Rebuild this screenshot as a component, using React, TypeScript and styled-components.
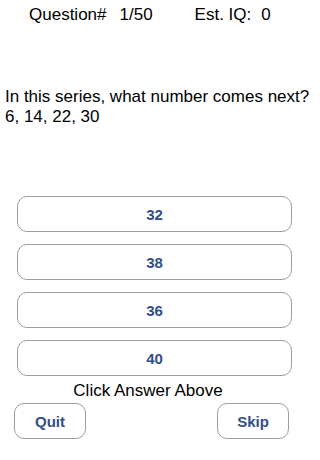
import React from "react";
import styled, { createGlobalStyle } from "styled-components";

const GlobalStyle = createGlobalStyle`
  html, body {
    margin: 0;
    padding: 0;
    background: #ffffff;
  }
  body {
    font-family: "Liberation Sans", Arial, Helvetica, sans-serif;
    color: #000000;
  }
`;

const answers = ["32", "38", "36", "40"];

const App = () => {
  return (
    <Screen>
      <GlobalStyle />
      <Header>
        <HeaderLabel>Question#</HeaderLabel>
        <HeaderValue $gapLeft={13}>1/50</HeaderValue>
        <HeaderLabel $gapLeft={42}>Est. IQ:</HeaderLabel>
        <HeaderValue $gapLeft={10}>0</HeaderValue>
      </Header>
      <QuestionText>
        In this series, what number comes next?
        <br />
        6, 14, 22, 30
      </QuestionText>
      <AnswerList>
        {answers.map((a) => (
          <AnswerButton key={a}>{a}</AnswerButton>
        ))}
      </AnswerList>
      <Hint>Click Answer Above</Hint>
      <BottomRow>
        <SmallButton>Quit</SmallButton>
        <SmallButton>Skip</SmallButton>
      </BottomRow>
    </Screen>
  );
};

export default App;

const Screen = styled.div`
  width: 320px;
  height: 460px;
  display: flex;
  flex-direction: column;
  background: #ffffff;
  overflow: hidden;
`;

const Header = styled.div`
  display: flex;
  align-items: center;
  padding: 5px 0 0 29px;
  height: 20px;
  font-size: 17px;
  line-height: 20px;
`;

const HeaderLabel = styled.span<{ $gapLeft?: number }>`
  margin-left: ${(p) => (p.$gapLeft ? `${p.$gapLeft}px` : "0")};
`;

const HeaderValue = styled.span<{ $gapLeft: number }>`
  margin-left: ${(p) => p.$gapLeft}px;
`;

const QuestionText = styled.div`
  margin-top: 62px;
  padding-left: 5px;
  font-size: 17px;
  line-height: 20px;
`;

const AnswerList = styled.div`
  display: flex;
  flex-direction: column;
  gap: 12px;
  margin-top: 69px;
  padding-left: 17px;
`;

const buttonBase = `
  display: flex;
  justify-content: center;
  align-items: center;
  box-sizing: border-box;
  height: 36px;
  background: #ffffff;
  border: 1px solid #9c9c9c;
  border-radius: 10px;
  font-family: "Liberation Sans", Arial, Helvetica, sans-serif;
  font-weight: 700;
  font-size: 15px;
  color: #324e8a;
  cursor: pointer;
  padding: 0;
`;

const AnswerButton = styled.button`
  ${buttonBase}
  width: 275px;
`;

const Hint = styled.div`
  width: 296px;
  margin-top: 5px;
  text-align: center;
  font-size: 17px;
  line-height: 20px;
`;

const BottomRow = styled.div`
  display: flex;
  justify-content: space-between;
  margin-top: 2px;
  padding: 0 31px 0 14px;
`;

const SmallButton = styled.button`
  ${buttonBase}
  width: 72px;
`;
